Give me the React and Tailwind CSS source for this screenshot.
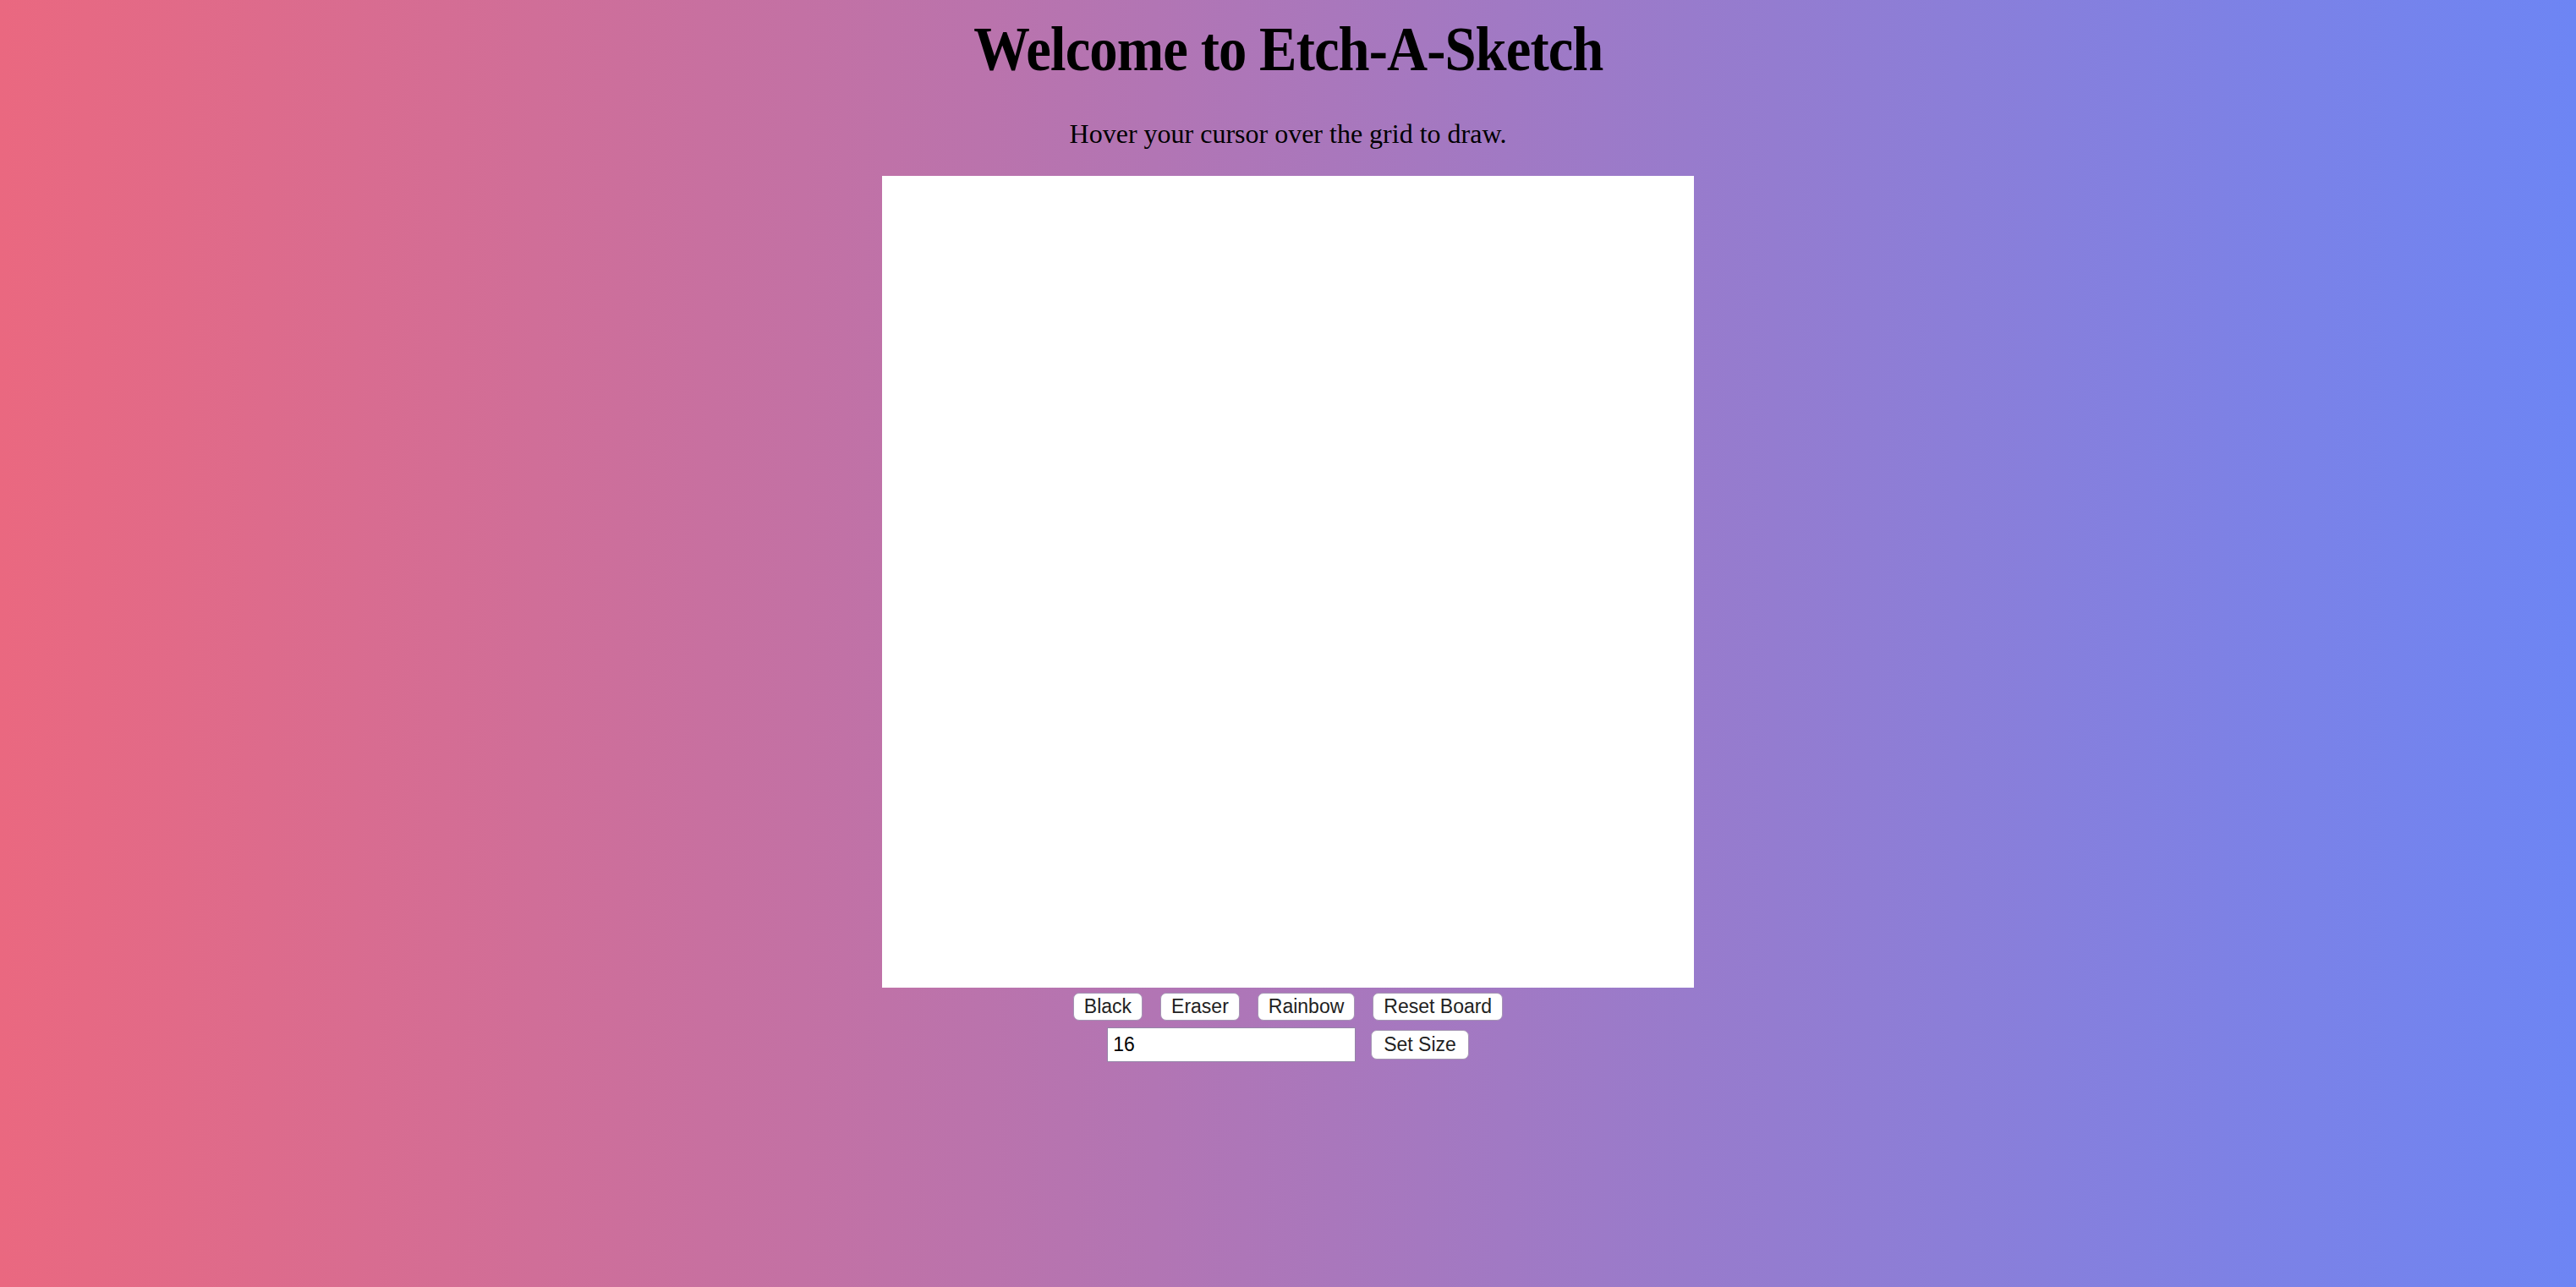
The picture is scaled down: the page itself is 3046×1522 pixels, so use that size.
import React, { useState } from "react";

const buttons = ["Black", "Eraser", "Rainbow", "Reset Board"];

export default function App() {
  const [size, setSize] = useState("16");

  return (
    <div className="min-h-screen w-full bg-[linear-gradient(to_right,#ea6880,#6d85f4)] flex flex-col items-center">
      {/* Header */}
      <h1 className="mt-[18px] text-[74px] leading-[80px] font-bold text-black tracking-[-1px] scale-x-[0.9] font-['Liberation_Serif',serif]">
        Welcome to Etch-A-Sketch
      </h1>
      <p className="mt-[42px] text-[32px] leading-[36px] text-black font-['Liberation_Serif',serif]">
        Hover your cursor over the grid to draw.
      </p>

      {/* Board */}
      <div className="mt-[32px] w-[960px] h-[960px] bg-white" />

      {/* Controls */}
      <div className="mt-[6px] flex gap-[21px] font-['Liberation_Sans',sans-serif]">
        {buttons.map((b) => (
          <button
            key={b}
            className="h-[33px] px-[12px] bg-white rounded-[7px] border border-[#a595b4] text-[23px] leading-none text-[#222]"
          >
            {b}
          </button>
        ))}
      </div>
      <div className="mt-[8px] flex items-center gap-[18px] font-['Liberation_Sans',sans-serif]">
        <input
          value={size}
          onChange={(e) => setSize(e.target.value)}
          className="w-[294px] h-[41px] px-[6px] bg-white border border-[#9585a8] text-[23px] text-black outline-none"
        />
        <button className="h-[35px] px-[14px] bg-white rounded-[7px] border border-[#a595b4] text-[23px] leading-none text-[#222]">
          Set Size
        </button>
      </div>
    </div>
  );
}
